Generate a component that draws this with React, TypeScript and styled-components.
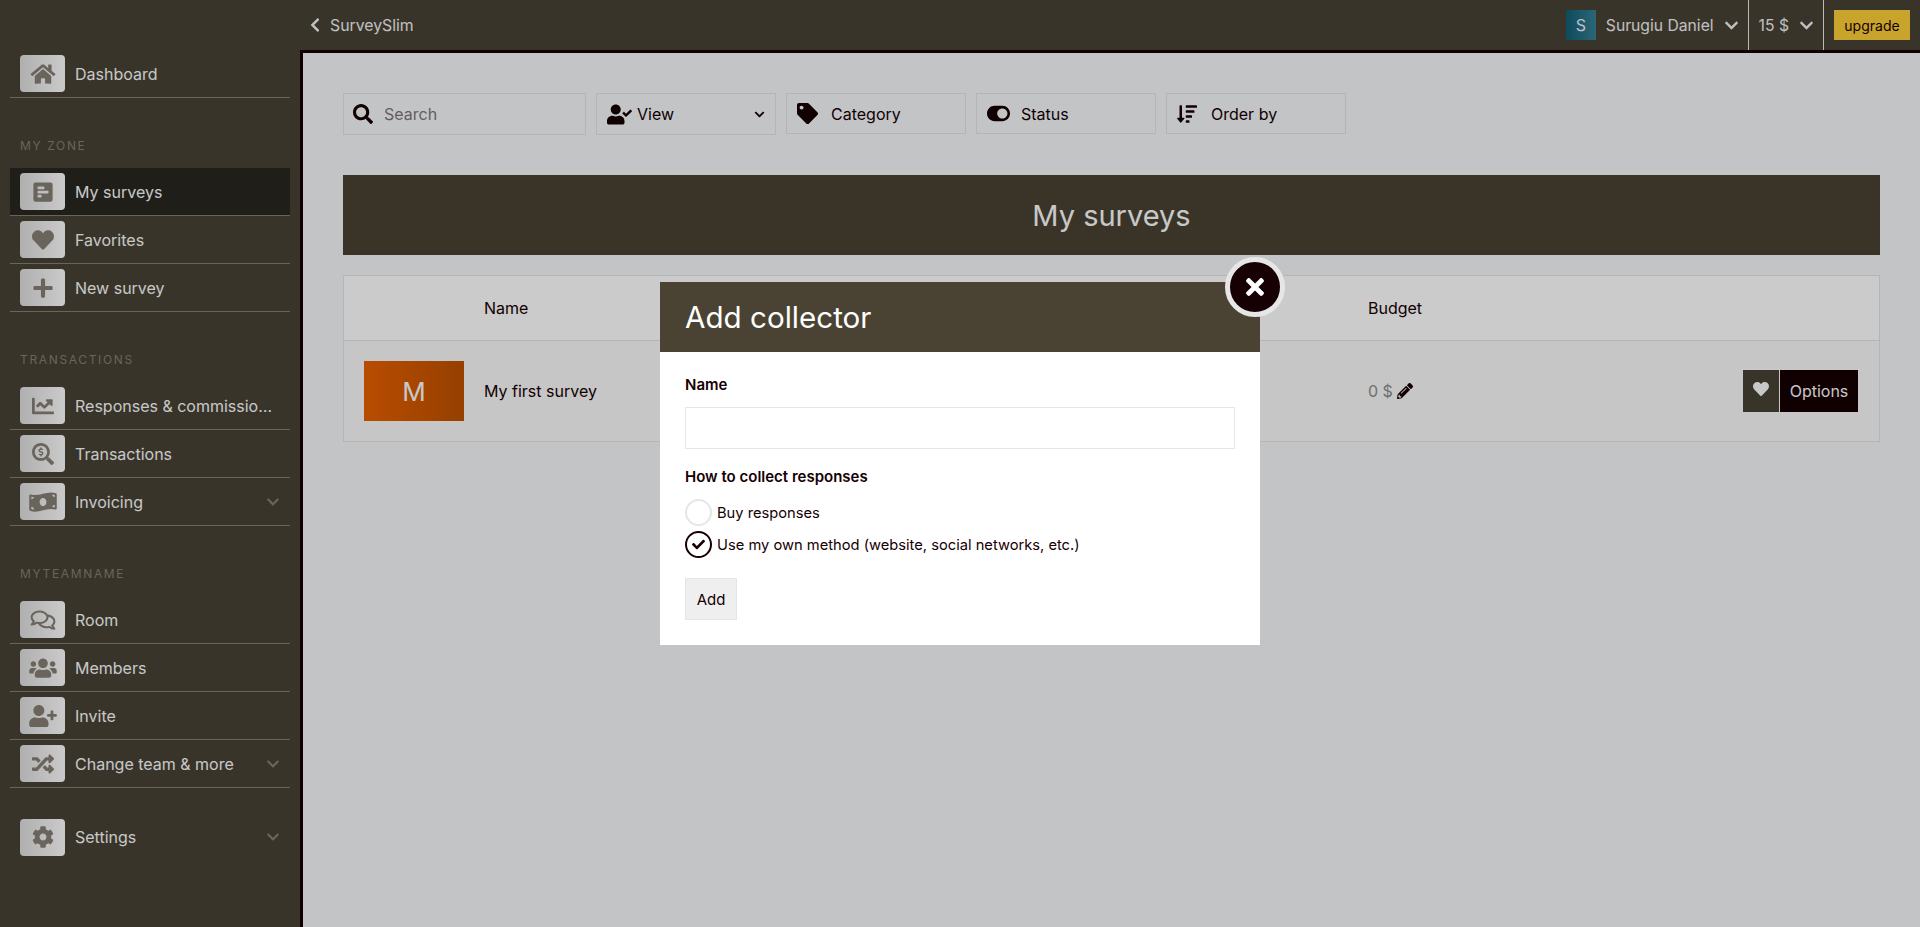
import type { ReactNode } from 'react';
import styled, { createGlobalStyle } from 'styled-components';
import {
  FaChartLine,
  FaCheck,
  FaChevronDown,
  FaChevronLeft,
  FaCog,
  FaHeart,
  FaHome,
  FaMoneyBillWave,
  FaPencilAlt,
  FaPlus,
  FaPollH,
  FaRandom,
  FaRegComments,
  FaSearch,
  FaSearchDollar,
  FaSortAmountDown,
  FaTag,
  FaTimes,
  FaToggleOn,
  FaUserCheck,
  FaUserPlus,
  FaUsers,
} from 'react-icons/fa';

const GlobalStyle = createGlobalStyle`
  html, body {
    margin: 0;
    padding: 0;
    height: 100%;
    overflow: hidden;
    background: #f4f5f7;
  }
  body, input, button {
    font-family: 'Inter', 'Noto Sans', sans-serif;
  }
  * {
    box-sizing: border-box;
  }
`;

const Shell = styled.div`
  display: flex;
  flex-direction: column;
  height: 100vh;
`;

const TopBar = styled.header`
  display: flex;
  align-items: center;
  height: 50px;
  flex-shrink: 0;
  background: #464134;
  color: #f0f0f0;
`;

const Brand = styled.div`
  display: flex;
  align-items: center;
  gap: 7px;
  margin-left: 307px;
  font-size: 15.8px;
  svg {
    font-size: 16px;
  }
`;

const TopRight = styled.div`
  display: flex;
  align-items: center;
  height: 100%;
  margin-left: auto;
`;

const Avatar = styled.div`
  display: flex;
  align-items: center;
  justify-content: center;
  width: 30px;
  height: 30px;
  background: linear-gradient(to right, #125d73, #368195);
  font-size: 16px;
`;

const TopCell = styled.div`
  display: flex;
  align-items: center;
  height: 100%;
  gap: 10px;
  padding: 0 9px 0 10px;
  border-right: 1px solid #e8e8e8;
  font-size: 15.7px;
  svg {
    font-size: 15px;
  }
`;

const UpgradeButton = styled.button`
  width: 76px;
  height: 30px;
  margin: 0 10px;
  padding: 0;
  border: none;
  background: #fbce37;
  color: #160003;
  font-size: 14px;
`;

const Body = styled.div`
  display: flex;
  flex: 1;
  min-height: 0;
`;

const Sidebar = styled.nav`
  width: 300px;
  flex-shrink: 0;
  padding: 0 10px;
  background: #464134;
`;

const SectionLabel = styled.div`
  height: 70px;
  padding: 40px 0 0 10px;
  font-size: 12px;
  line-height: 16px;
  letter-spacing: 1.65px;
  color: #857f73;
`;

const NavRow = styled.a<{ $active?: boolean; $plain?: boolean; $spaced?: boolean }>`
  display: flex;
  align-items: center;
  gap: 10px;
  height: 48px;
  padding: 0 10px;
  margin-top: ${p => (p.$spaced ? '25px' : '0')};
  background: ${p => (p.$active ? '#272620' : 'transparent')};
  border-bottom: ${p => (p.$plain ? 'none' : '1px solid #857f73')};
  color: #fafafa;
  font-size: 16px;
`;

const NavIcon = styled.span`
  display: flex;
  align-items: center;
  justify-content: center;
  flex-shrink: 0;
  width: 45px;
  height: 37px;
  border-radius: 4px;
  background: linear-gradient(to right, #dcdcdc, #fdfdfd);
  color: #857f73;
  svg {
    width: 28px;
    height: 22px;
  }
`;

const NavLabel = styled.span`
  max-width: 200px;
  white-space: nowrap;
  overflow: hidden;
  text-overflow: ellipsis;
`;

const NavChevron = styled(FaChevronDown)`
  margin-left: auto;
  font-size: 14px;
  color: #857f73;
`;

const Main = styled.main`
  flex: 1;
  min-width: 0;
  padding: 40px;
  background: #f4f5f7;
  border-top: 3px solid #160003;
  border-left: 3px solid #160003;
  color: #160003;
`;

const Filters = styled.div`
  display: flex;
  gap: 10px;
  align-items: flex-start;
`;

const SearchBox = styled.label`
  display: flex;
  align-items: center;
  gap: 11px;
  width: 243px;
  height: 42px;
  padding: 0 9px;
  border: 1px solid #e2e3e5;
  font-size: 20px;
`;

const SearchInput = styled.input`
  flex: 1;
  min-width: 0;
  border: none;
  outline: none;
  padding: 0;
  background: transparent;
  font-size: 16px;
  color: #160003;
  &::placeholder {
    color: #7c7577;
    opacity: 1;
  }
`;

const Filter = styled.div<{ $select?: boolean }>`
  display: grid;
  grid-template-columns: ${p => (p.$select ? '30px 1fr auto' : '34px 1fr')};
  align-items: center;
  width: 180px;
  height: ${p => (p.$select ? '42px' : '41px')};
  padding: 0 10px;
  border: 1px solid #e2e3e5;
  font-size: 16px;
`;

const FilterIcon = styled.span<{ $size: number }>`
  display: flex;
  align-items: center;
  font-size: ${p => p.$size}px;
`;

const FilterCaret = styled(FaChevronDown)`
  font-size: 11px;
`;

const Banner = styled.h1`
  display: flex;
  align-items: center;
  justify-content: center;
  height: 80px;
  margin: 40px 0 20px;
  background: #494233;
  color: #fafafa;
  font-size: 29px;
  font-weight: 400;
`;

const Table = styled.section`
  border: 1px solid #e2e3e5;
`;

const columns = '140px 884px 1fr auto';

const HeadRow = styled.div`
  display: grid;
  grid-template-columns: ${columns};
  align-items: center;
  height: 65px;
  background: #fefefe;
  border-bottom: 1px solid #e2e3e5;
  font-size: 16px;
`;

const SurveyRow = styled.div`
  display: grid;
  grid-template-columns: ${columns};
  align-items: center;
  height: 100px;
  padding-right: 20px;
  background: #f8f8f8;
  font-size: 16px;
`;

const HeadCell = styled.div<{ $col: number }>`
  grid-column: ${p => p.$col};
`;

const Tile = styled.div`
  display: flex;
  align-items: center;
  justify-content: center;
  width: 100px;
  height: 60px;
  margin-left: 20px;
  background: linear-gradient(to right, #e66000, #bc5000);
  color: #fafafa;
  font-size: 26px;
`;

const Budget = styled.div`
  display: flex;
  align-items: center;
  gap: 4px;
  color: #8a8a8a;
  svg {
    color: #160003;
    font-size: 16px;
  }
`;

const RowActions = styled.div`
  display: flex;
  height: 44px;
  margin-bottom: 1px;
  gap: 1px;
  border: 1px solid #fafafa;
  background: #fafafa;
`;

const HeartButton = styled.button`
  width: 36px;
  padding: 0;
  border: none;
  background: #464134;
  color: #fafafa;
  font-size: 16px;
`;

const OptionsButton = styled.button`
  width: 78px;
  padding: 0;
  border: none;
  background: #160003;
  color: #fafafa;
  font-size: 16px;
`;

const Overlay = styled.div`
  position: fixed;
  inset: 0;
  display: flex;
  justify-content: center;
  align-items: flex-start;
  padding-top: 282px;
  background: rgba(0, 0, 0, 0.2);
`;

const Modal = styled.div`
  position: relative;
  width: 600px;
  background: #fff;
  color: #160003;
`;

const ModalHeader = styled.h2`
  display: flex;
  align-items: center;
  height: 70px;
  margin: 0;
  padding: 0 25px;
  background: #4a4334;
  color: #fff;
  font-size: 29.6px;
  font-weight: 400;
`;

const CloseButton = styled.button`
  position: absolute;
  top: -25px;
  right: -25px;
  display: flex;
  align-items: center;
  justify-content: center;
  width: 60px;
  height: 60px;
  padding: 0;
  border: 5px solid #e6e6e6;
  border-radius: 50%;
  background: #160003;
  color: #fff;
  font-size: 26px;
`;

const ModalBody = styled.div`
  padding: 24px 25px 25px;
`;

const FieldLabel = styled.div`
  font-size: 15px;
  line-height: 18px;
  font-weight: 600;
`;

const NameInput = styled.input`
  display: block;
  width: 100%;
  height: 42px;
  margin: 13px 0 19px;
  padding: 0 10px;
  border: 1px solid #e6e6e6;
  outline: none;
`;

const RadioRow = styled.div<{ $first?: boolean }>`
  display: flex;
  align-items: center;
  gap: 5px;
  height: 27px;
  margin-top: ${p => (p.$first ? '13px' : '5px')};
  font-size: 14.7px;
`;

const RadioMark = styled.span<{ $checked?: boolean }>`
  display: flex;
  align-items: center;
  justify-content: center;
  width: 27px;
  height: 27px;
  border-radius: 50%;
  border: 2px solid ${p => (p.$checked ? '#160003' : '#e6e6e6')};
  font-size: 13px;
`;

const AddButton = styled.button`
  display: block;
  width: 52px;
  height: 42px;
  margin-top: 20px;
  padding: 0;
  border: 1px solid #e6e6e6;
  background: #efefef;
  color: #160003;
  font-size: 15px;
`;

type NavEntry = { icon: ReactNode; label: string; active?: boolean; more?: boolean };

const NavItem = ({ icon, label, active, more }: NavEntry) => (
  <NavRow $active={active}>
    <NavIcon>{icon}</NavIcon>
    <NavLabel>{label}</NavLabel>
    {more && <NavChevron />}
  </NavRow>
);

const App = () => {
  return (
    <Shell>
      <GlobalStyle />
      <TopBar>
        <Brand>
          <FaChevronLeft />
          SurveySlim
        </Brand>
        <TopRight>
          <TopCell>
            <Avatar>S</Avatar>
            Surugiu Daniel
            <FaChevronDown />
          </TopCell>
          <TopCell>
            15 $
            <FaChevronDown />
          </TopCell>
          <UpgradeButton>upgrade</UpgradeButton>
        </TopRight>
      </TopBar>
      <Body>
        <Sidebar>
          <NavItem icon={<FaHome />} label='Dashboard' />
          <SectionLabel>MY ZONE</SectionLabel>
          <NavItem icon={<FaPollH />} label='My surveys' active />
          <NavItem icon={<FaHeart />} label='Favorites' />
          <NavItem icon={<FaPlus />} label='New survey' />
          <SectionLabel>TRANSACTIONS</SectionLabel>
          <NavItem icon={<FaChartLine />} label='Responses & commissions' />
          <NavItem icon={<FaSearchDollar />} label='Transactions' />
          <NavItem icon={<FaMoneyBillWave />} label='Invoicing' more />
          <SectionLabel>MYTEAMNAME</SectionLabel>
          <NavItem icon={<FaRegComments />} label='Room' />
          <NavItem icon={<FaUsers />} label='Members' />
          <NavItem icon={<FaUserPlus />} label='Invite' />
          <NavItem icon={<FaRandom />} label='Change team & more' more />
          <NavRow $plain $spaced>
            <NavIcon>
              <FaCog />
            </NavIcon>
            <NavLabel>Settings</NavLabel>
            <NavChevron />
          </NavRow>
        </Sidebar>
        <Main>
          <Filters>
            <SearchBox>
              <FaSearch />
              <SearchInput placeholder='Search' />
            </SearchBox>
            <Filter $select>
              <FilterIcon $size={25}>
                <FaUserCheck />
              </FilterIcon>
              View
              <FilterCaret />
            </Filter>
            <Filter>
              <FilterIcon $size={21}>
                <FaTag />
              </FilterIcon>
              Category
            </Filter>
            <Filter>
              <FilterIcon $size={23}>
                <FaToggleOn />
              </FilterIcon>
              Status
            </Filter>
            <Filter>
              <FilterIcon $size={20}>
                <FaSortAmountDown />
              </FilterIcon>
              Order by
            </Filter>
          </Filters>
          <Banner>My surveys</Banner>
          <Table>
            <HeadRow>
              <HeadCell $col={2}>Name</HeadCell>
              <HeadCell $col={3}>Budget</HeadCell>
            </HeadRow>
            <SurveyRow>
              <Tile>M</Tile>
              <div>My first survey</div>
              <Budget>
                0 $
                <FaPencilAlt />
              </Budget>
              <RowActions>
                <HeartButton>
                  <FaHeart />
                </HeartButton>
                <OptionsButton>Options</OptionsButton>
              </RowActions>
            </SurveyRow>
          </Table>
        </Main>
      </Body>
      <Overlay>
        <Modal>
          <ModalHeader>Add collector</ModalHeader>
          <CloseButton>
            <FaTimes />
          </CloseButton>
          <ModalBody>
            <FieldLabel>Name</FieldLabel>
            <NameInput />
            <FieldLabel>How to collect responses</FieldLabel>
            <RadioRow $first>
              <RadioMark />
              Buy responses
            </RadioRow>
            <RadioRow>
              <RadioMark $checked>
                <FaCheck />
              </RadioMark>
              Use my own method (website, social networks, etc.)
            </RadioRow>
            <AddButton>Add</AddButton>
          </ModalBody>
        </Modal>
      </Overlay>
    </Shell>
  );
};

export default App;
